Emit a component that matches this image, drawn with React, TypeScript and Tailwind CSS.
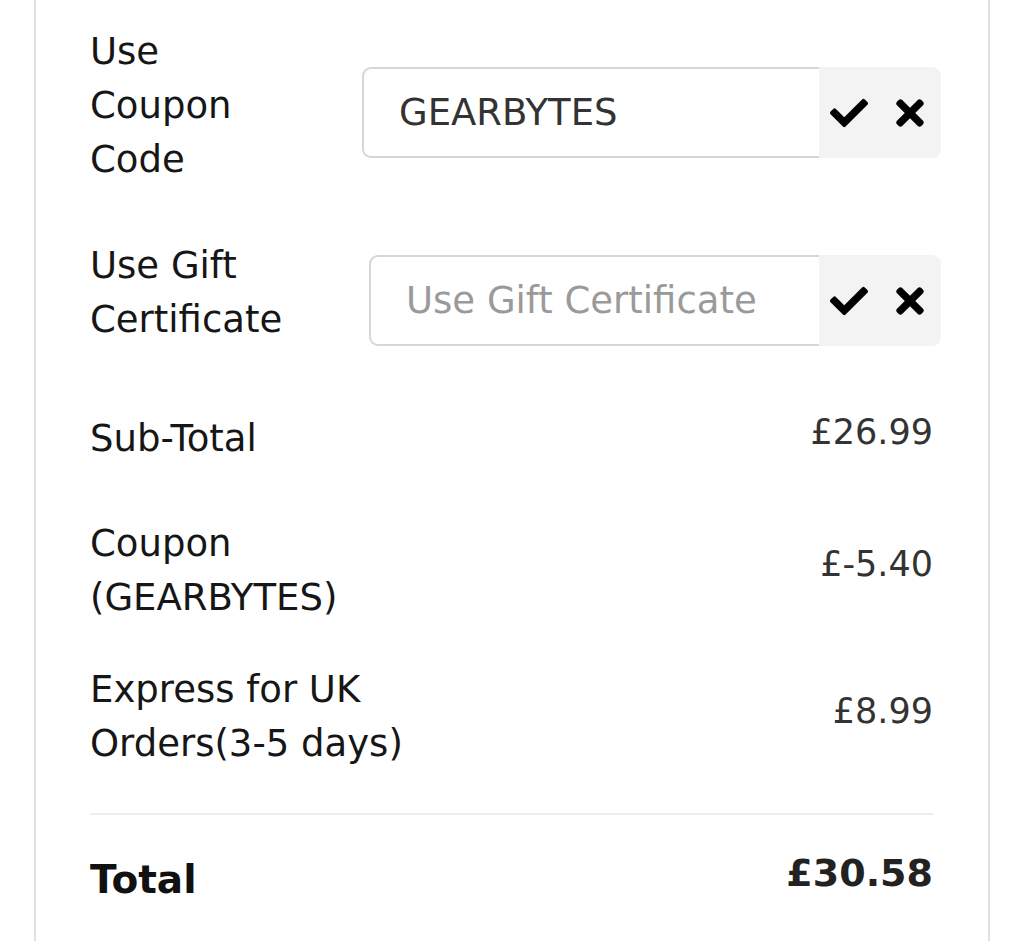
import { FaCheck, FaTimes } from "react-icons/fa";

const FONT = "font-['DejaVu_Sans',sans-serif]";

function CodeInput({ value, placeholder }: { value?: string; placeholder: string }) {
  return (
    <div className="flex h-[91px] min-w-0 flex-1">
      <input
        readOnly
        value={value ?? ""}
        placeholder={placeholder}
        className={`${FONT} w-0 min-w-0 flex-1 rounded-l-[9px] border-2 border-r-0 border-[#d6d6d6] bg-white pl-[35px] text-[37px] text-[#333] placeholder:text-[#9a9a9a] outline-none`}
      />
      <div className="flex w-[122px] shrink-0 items-center gap-[28px] rounded-r-[9px] bg-[#f3f3f3] pl-[11px] text-black">
        <FaCheck className="h-[38px] w-[38px] shrink-0" />
        <FaTimes className="h-[40px] w-[28px] shrink-0" />
      </div>
    </div>
  );
}

export default function App() {
  return (
    <div className={`min-h-screen bg-white ${FONT}`}>
      <div className="ml-[34px] min-h-[941px] w-[956px] border-x-2 border-[#e2e2e2] pl-[54px] pr-[47px] pt-[25px]">
        {/* coupon code */}
        <div className="flex items-start">
          <div className="w-[200px] shrink-0 text-[37px] leading-[54px] text-[#161616]">Use Coupon Code</div>
          <div className="ml-[72px] mt-[42px] flex min-w-0 flex-1">
            <CodeInput value="GEARBYTES" placeholder="Use Coupon Code" />
          </div>
        </div>

        {/* gift certificate */}
        <div className="mt-[52px] flex items-start">
          <div className="w-[200px] shrink-0 text-[37px] leading-[54px] text-[#161616]">Use Gift Certificate</div>
          <div className="ml-[79px] mt-[16px] flex min-w-0 flex-1">
            <CodeInput placeholder="Use Gift Certificate" />
          </div>
        </div>

        {/* totals */}
        <div className="mt-[65px] flex items-start justify-between pr-[8px]">
          <div className="text-[37px] leading-[54px] text-[#161616]">Sub-Total</div>
          <div className="text-[35px] leading-[40px] text-[#333]">£26.99</div>
        </div>

        <div className="mt-[51px] flex items-start justify-between pr-[8px]">
          <div className="w-[330px] text-[37px] leading-[54px] text-[#161616]">Coupon (GEARBYTES)</div>
          <div className="mt-[27px] text-[35px] leading-[40px] text-[#333]">£-5.40</div>
        </div>

        <div className="mt-[38px] flex items-start justify-between pr-[8px]">
          <div className="w-[330px] text-[37px] leading-[54px] text-[#161616]">Express for UK Orders(3-5 days)</div>
          <div className="mt-[28px] text-[35px] leading-[40px] text-[#333]">£8.99</div>
        </div>

        <div className="mr-[8px] mt-[42px] h-[2px] bg-[#eeeeee]" />

        <div className="mt-[38px] flex items-start justify-between pr-[8px]">
          <div className="text-[39px] font-bold leading-[54px] text-[#111]">Total</div>
          <div className="text-[38px] font-bold leading-[40px] text-[#222]">£30.58</div>
        </div>
      </div>
    </div>
  );
}
